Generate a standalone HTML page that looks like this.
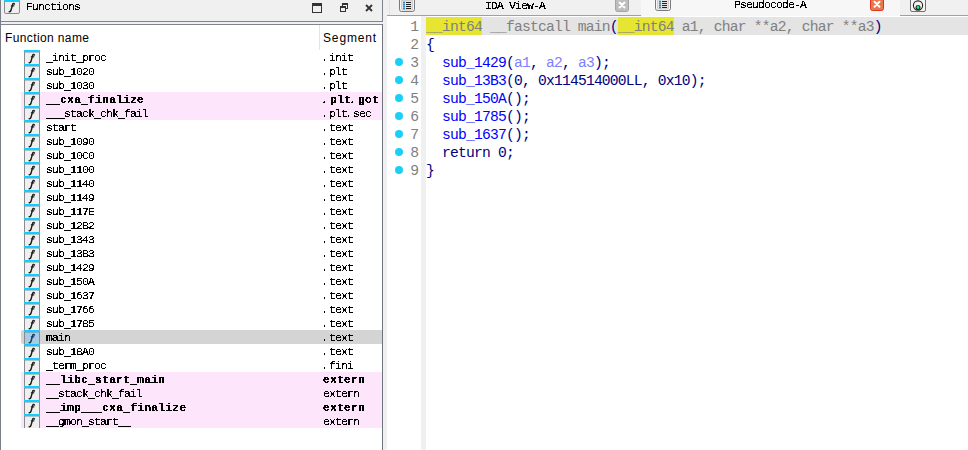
<!DOCTYPE html>
<html><head><meta charset="utf-8"><style>
*{margin:0;padding:0;box-sizing:border-box}
html,body{width:968px;height:450px;overflow:hidden;background:#f0f0f0;position:relative}
div,svg{position:absolute}
.ft{font-family:"Liberation Mono",monospace;font-size:11.5px;letter-spacing:-0.9px;line-height:15.0px;height:14px;color:#000;white-space:pre}
.u{position:relative;top:1px}
.d{position:relative;left:-2px}
.b{font-weight:bold;letter-spacing:0.1px}
.pink{left:21px;width:361px;height:14px;background:#fde6fb}
.sel{left:21px;width:361px;height:14px;background:#d4d4d4;border-radius:2px 0 0 2px}
.cl{left:426px;font-family:"Liberation Mono",monospace;font-size:14.67px;letter-spacing:-0.802px;line-height:18px;height:18px;white-space:pre}
.ln{left:395px;width:24px;text-align:right;font-family:"Liberation Mono",monospace;font-size:14.67px;line-height:18px;color:#808080}
.dot{left:395px;width:8px;height:8px;border-radius:50%;background:#1ad0f8}
.tt{font-family:"Liberation Mono",monospace;font-size:11.5px;letter-spacing:-0.9px;line-height:12px;color:#000;white-space:pre}
.hd{font-family:"Liberation Sans",sans-serif;font-size:12px;letter-spacing:0.38px;color:#000;line-height:14px;white-space:pre}
</style></head><body>
<svg width="0" height="0" style="left:0;top:0"><filter id="crisp" x="0" y="0" width="1" height="1" color-interpolation-filters="sRGB"><feComponentTransfer><feFuncA type="discrete" tableValues="0 1 1"/></feComponentTransfer></filter></svg>
<div style="left:0;top:0;width:1px;height:450px;background:#7a7e86"></div>
<div style="left:1px;top:0;width:381px;height:21px;background:#f0f0f0"></div>
<svg style="left:4px;top:-1px" width="16" height="15" viewBox="0 0 16 15"><rect x="0.5" y="0.5" width="15" height="14" rx="1.5" fill="#efefef" stroke="#8a8a8a"/><rect x="0" y="0" width="16" height="3" fill="#14cdfa"/><g transform="translate(0,0)" fill="none" stroke="#1e1e1e" stroke-linecap="round"><path d="M10.4 4.9C9.8 4.2 8.9 4.4 8.6 5.6L6.9 11.6C6.6 12.5 6.0 12.9 5.2 12.7" stroke-width="1.5"/><path d="M7.4 6.8L9.8 6.8" stroke-width="1.3"/></g></svg>
<svg style="left:312px;top:3px" width="10" height="10"><rect x="0.5" y="0.5" width="9" height="9" fill="none" stroke="#333"/><rect x="0" y="0" width="10" height="3" fill="#333"/></svg>
<svg style="left:340px;top:3px" width="8" height="9"><rect x="2.5" y="0.5" width="5" height="5" fill="#f0f0f0" stroke="#333"/><rect x="2" y="0" width="6" height="2" fill="#333"/><rect x="0.5" y="3.5" width="5" height="5" fill="#f0f0f0" stroke="#333"/><rect x="0" y="3" width="6" height="2" fill="#333"/></svg>
<svg style="left:365px;top:4px" width="8" height="8"><path d="M1 1L7 7M7 1L1 7" stroke="#333" stroke-width="1.8"/></svg>
<div style="left:1px;top:21px;width:382px;height:1px;background:#80848c"></div>
<div style="left:382px;top:0;width:1px;height:22px;background:#80848c"></div>
<div style="left:1px;top:24px;width:382px;height:1px;background:#80848c"></div>
<div style="left:382px;top:24px;width:1px;height:426px;background:#6e737c"></div>
<div style="left:1px;top:25px;width:381px;height:425px;background:#fff"></div>
<div class="hd" style="left:5px;top:31px">Function name</div>
<div class="hd" style="left:323px;top:31px;letter-spacing:0.85px">Segment</div>
<div style="left:319px;top:25px;width:1px;height:25px;background:#e3e3e3"></div>
<svg style="left:24px;top:50px" width="16" height="14" viewBox="0 0 16 14"><rect x="0" y="0" width="16" height="14" fill="#efefef"/><rect x="0" y="0" width="1" height="14" fill="#8a8a8a"/><rect x="15" y="0" width="1" height="14" fill="#8a8a8a"/><rect x="0" y="0" width="16" height="2" fill="#14cdfa"/><rect x="1" y="2" width="14" height="1" fill="#2a7f9a" opacity=".35"/><g transform="translate(0,0)" fill="none" stroke="#1e1e1e" stroke-linecap="round"><path d="M10.4 4.9C9.8 4.2 8.9 4.4 8.6 5.6L6.9 11.6C6.6 12.5 6.0 12.9 5.2 12.7" stroke-width="1.5"/><path d="M7.4 6.8L9.8 6.8" stroke-width="1.3"/></g></svg>
<svg style="left:24px;top:64px" width="16" height="14" viewBox="0 0 16 14"><rect x="0" y="0" width="16" height="14" fill="#efefef"/><rect x="0" y="0" width="1" height="14" fill="#8a8a8a"/><rect x="15" y="0" width="1" height="14" fill="#8a8a8a"/><rect x="0" y="0" width="16" height="2" fill="#14cdfa"/><rect x="1" y="2" width="14" height="1" fill="#2a7f9a" opacity=".35"/><g transform="translate(0,0)" fill="none" stroke="#1e1e1e" stroke-linecap="round"><path d="M10.4 4.9C9.8 4.2 8.9 4.4 8.6 5.6L6.9 11.6C6.6 12.5 6.0 12.9 5.2 12.7" stroke-width="1.5"/><path d="M7.4 6.8L9.8 6.8" stroke-width="1.3"/></g></svg>
<svg style="left:24px;top:78px" width="16" height="14" viewBox="0 0 16 14"><rect x="0" y="0" width="16" height="14" fill="#efefef"/><rect x="0" y="0" width="1" height="14" fill="#8a8a8a"/><rect x="15" y="0" width="1" height="14" fill="#8a8a8a"/><rect x="0" y="0" width="16" height="2" fill="#14cdfa"/><rect x="1" y="2" width="14" height="1" fill="#2a7f9a" opacity=".35"/><g transform="translate(0,0)" fill="none" stroke="#1e1e1e" stroke-linecap="round"><path d="M10.4 4.9C9.8 4.2 8.9 4.4 8.6 5.6L6.9 11.6C6.6 12.5 6.0 12.9 5.2 12.7" stroke-width="1.5"/><path d="M7.4 6.8L9.8 6.8" stroke-width="1.3"/></g></svg>
<div class="pink" style="top:92px"></div>
<svg style="left:24px;top:92px" width="16" height="14" viewBox="0 0 16 14"><rect x="0" y="0" width="16" height="14" fill="#efefef"/><rect x="0" y="0" width="1" height="14" fill="#8a8a8a"/><rect x="15" y="0" width="1" height="14" fill="#8a8a8a"/><rect x="0" y="0" width="16" height="2" fill="#14cdfa"/><rect x="1" y="2" width="14" height="1" fill="#2a7f9a" opacity=".35"/><g transform="translate(0,0)" fill="none" stroke="#1e1e1e" stroke-linecap="round"><path d="M10.4 4.9C9.8 4.2 8.9 4.4 8.6 5.6L6.9 11.6C6.6 12.5 6.0 12.9 5.2 12.7" stroke-width="1.5"/><path d="M7.4 6.8L9.8 6.8" stroke-width="1.3"/></g></svg>
<div class="pink" style="top:106px"></div>
<svg style="left:24px;top:106px" width="16" height="14" viewBox="0 0 16 14"><rect x="0" y="0" width="16" height="14" fill="#efefef"/><rect x="0" y="0" width="1" height="14" fill="#8a8a8a"/><rect x="15" y="0" width="1" height="14" fill="#8a8a8a"/><rect x="0" y="0" width="16" height="2" fill="#14cdfa"/><rect x="1" y="2" width="14" height="1" fill="#2a7f9a" opacity=".35"/><g transform="translate(0,0)" fill="none" stroke="#1e1e1e" stroke-linecap="round"><path d="M10.4 4.9C9.8 4.2 8.9 4.4 8.6 5.6L6.9 11.6C6.6 12.5 6.0 12.9 5.2 12.7" stroke-width="1.5"/><path d="M7.4 6.8L9.8 6.8" stroke-width="1.3"/></g></svg>
<svg style="left:24px;top:120px" width="16" height="14" viewBox="0 0 16 14"><rect x="0" y="0" width="16" height="14" fill="#efefef"/><rect x="0" y="0" width="1" height="14" fill="#8a8a8a"/><rect x="15" y="0" width="1" height="14" fill="#8a8a8a"/><rect x="0" y="0" width="16" height="2" fill="#14cdfa"/><rect x="1" y="2" width="14" height="1" fill="#2a7f9a" opacity=".35"/><g transform="translate(0,0)" fill="none" stroke="#1e1e1e" stroke-linecap="round"><path d="M10.4 4.9C9.8 4.2 8.9 4.4 8.6 5.6L6.9 11.6C6.6 12.5 6.0 12.9 5.2 12.7" stroke-width="1.5"/><path d="M7.4 6.8L9.8 6.8" stroke-width="1.3"/></g></svg>
<svg style="left:24px;top:134px" width="16" height="14" viewBox="0 0 16 14"><rect x="0" y="0" width="16" height="14" fill="#efefef"/><rect x="0" y="0" width="1" height="14" fill="#8a8a8a"/><rect x="15" y="0" width="1" height="14" fill="#8a8a8a"/><rect x="0" y="0" width="16" height="2" fill="#14cdfa"/><rect x="1" y="2" width="14" height="1" fill="#2a7f9a" opacity=".35"/><g transform="translate(0,0)" fill="none" stroke="#1e1e1e" stroke-linecap="round"><path d="M10.4 4.9C9.8 4.2 8.9 4.4 8.6 5.6L6.9 11.6C6.6 12.5 6.0 12.9 5.2 12.7" stroke-width="1.5"/><path d="M7.4 6.8L9.8 6.8" stroke-width="1.3"/></g></svg>
<svg style="left:24px;top:148px" width="16" height="14" viewBox="0 0 16 14"><rect x="0" y="0" width="16" height="14" fill="#efefef"/><rect x="0" y="0" width="1" height="14" fill="#8a8a8a"/><rect x="15" y="0" width="1" height="14" fill="#8a8a8a"/><rect x="0" y="0" width="16" height="2" fill="#14cdfa"/><rect x="1" y="2" width="14" height="1" fill="#2a7f9a" opacity=".35"/><g transform="translate(0,0)" fill="none" stroke="#1e1e1e" stroke-linecap="round"><path d="M10.4 4.9C9.8 4.2 8.9 4.4 8.6 5.6L6.9 11.6C6.6 12.5 6.0 12.9 5.2 12.7" stroke-width="1.5"/><path d="M7.4 6.8L9.8 6.8" stroke-width="1.3"/></g></svg>
<svg style="left:24px;top:162px" width="16" height="14" viewBox="0 0 16 14"><rect x="0" y="0" width="16" height="14" fill="#efefef"/><rect x="0" y="0" width="1" height="14" fill="#8a8a8a"/><rect x="15" y="0" width="1" height="14" fill="#8a8a8a"/><rect x="0" y="0" width="16" height="2" fill="#14cdfa"/><rect x="1" y="2" width="14" height="1" fill="#2a7f9a" opacity=".35"/><g transform="translate(0,0)" fill="none" stroke="#1e1e1e" stroke-linecap="round"><path d="M10.4 4.9C9.8 4.2 8.9 4.4 8.6 5.6L6.9 11.6C6.6 12.5 6.0 12.9 5.2 12.7" stroke-width="1.5"/><path d="M7.4 6.8L9.8 6.8" stroke-width="1.3"/></g></svg>
<svg style="left:24px;top:176px" width="16" height="14" viewBox="0 0 16 14"><rect x="0" y="0" width="16" height="14" fill="#efefef"/><rect x="0" y="0" width="1" height="14" fill="#8a8a8a"/><rect x="15" y="0" width="1" height="14" fill="#8a8a8a"/><rect x="0" y="0" width="16" height="2" fill="#14cdfa"/><rect x="1" y="2" width="14" height="1" fill="#2a7f9a" opacity=".35"/><g transform="translate(0,0)" fill="none" stroke="#1e1e1e" stroke-linecap="round"><path d="M10.4 4.9C9.8 4.2 8.9 4.4 8.6 5.6L6.9 11.6C6.6 12.5 6.0 12.9 5.2 12.7" stroke-width="1.5"/><path d="M7.4 6.8L9.8 6.8" stroke-width="1.3"/></g></svg>
<svg style="left:24px;top:190px" width="16" height="14" viewBox="0 0 16 14"><rect x="0" y="0" width="16" height="14" fill="#efefef"/><rect x="0" y="0" width="1" height="14" fill="#8a8a8a"/><rect x="15" y="0" width="1" height="14" fill="#8a8a8a"/><rect x="0" y="0" width="16" height="2" fill="#14cdfa"/><rect x="1" y="2" width="14" height="1" fill="#2a7f9a" opacity=".35"/><g transform="translate(0,0)" fill="none" stroke="#1e1e1e" stroke-linecap="round"><path d="M10.4 4.9C9.8 4.2 8.9 4.4 8.6 5.6L6.9 11.6C6.6 12.5 6.0 12.9 5.2 12.7" stroke-width="1.5"/><path d="M7.4 6.8L9.8 6.8" stroke-width="1.3"/></g></svg>
<svg style="left:24px;top:204px" width="16" height="14" viewBox="0 0 16 14"><rect x="0" y="0" width="16" height="14" fill="#efefef"/><rect x="0" y="0" width="1" height="14" fill="#8a8a8a"/><rect x="15" y="0" width="1" height="14" fill="#8a8a8a"/><rect x="0" y="0" width="16" height="2" fill="#14cdfa"/><rect x="1" y="2" width="14" height="1" fill="#2a7f9a" opacity=".35"/><g transform="translate(0,0)" fill="none" stroke="#1e1e1e" stroke-linecap="round"><path d="M10.4 4.9C9.8 4.2 8.9 4.4 8.6 5.6L6.9 11.6C6.6 12.5 6.0 12.9 5.2 12.7" stroke-width="1.5"/><path d="M7.4 6.8L9.8 6.8" stroke-width="1.3"/></g></svg>
<svg style="left:24px;top:218px" width="16" height="14" viewBox="0 0 16 14"><rect x="0" y="0" width="16" height="14" fill="#efefef"/><rect x="0" y="0" width="1" height="14" fill="#8a8a8a"/><rect x="15" y="0" width="1" height="14" fill="#8a8a8a"/><rect x="0" y="0" width="16" height="2" fill="#14cdfa"/><rect x="1" y="2" width="14" height="1" fill="#2a7f9a" opacity=".35"/><g transform="translate(0,0)" fill="none" stroke="#1e1e1e" stroke-linecap="round"><path d="M10.4 4.9C9.8 4.2 8.9 4.4 8.6 5.6L6.9 11.6C6.6 12.5 6.0 12.9 5.2 12.7" stroke-width="1.5"/><path d="M7.4 6.8L9.8 6.8" stroke-width="1.3"/></g></svg>
<svg style="left:24px;top:232px" width="16" height="14" viewBox="0 0 16 14"><rect x="0" y="0" width="16" height="14" fill="#efefef"/><rect x="0" y="0" width="1" height="14" fill="#8a8a8a"/><rect x="15" y="0" width="1" height="14" fill="#8a8a8a"/><rect x="0" y="0" width="16" height="2" fill="#14cdfa"/><rect x="1" y="2" width="14" height="1" fill="#2a7f9a" opacity=".35"/><g transform="translate(0,0)" fill="none" stroke="#1e1e1e" stroke-linecap="round"><path d="M10.4 4.9C9.8 4.2 8.9 4.4 8.6 5.6L6.9 11.6C6.6 12.5 6.0 12.9 5.2 12.7" stroke-width="1.5"/><path d="M7.4 6.8L9.8 6.8" stroke-width="1.3"/></g></svg>
<svg style="left:24px;top:246px" width="16" height="14" viewBox="0 0 16 14"><rect x="0" y="0" width="16" height="14" fill="#efefef"/><rect x="0" y="0" width="1" height="14" fill="#8a8a8a"/><rect x="15" y="0" width="1" height="14" fill="#8a8a8a"/><rect x="0" y="0" width="16" height="2" fill="#14cdfa"/><rect x="1" y="2" width="14" height="1" fill="#2a7f9a" opacity=".35"/><g transform="translate(0,0)" fill="none" stroke="#1e1e1e" stroke-linecap="round"><path d="M10.4 4.9C9.8 4.2 8.9 4.4 8.6 5.6L6.9 11.6C6.6 12.5 6.0 12.9 5.2 12.7" stroke-width="1.5"/><path d="M7.4 6.8L9.8 6.8" stroke-width="1.3"/></g></svg>
<svg style="left:24px;top:260px" width="16" height="14" viewBox="0 0 16 14"><rect x="0" y="0" width="16" height="14" fill="#efefef"/><rect x="0" y="0" width="1" height="14" fill="#8a8a8a"/><rect x="15" y="0" width="1" height="14" fill="#8a8a8a"/><rect x="0" y="0" width="16" height="2" fill="#14cdfa"/><rect x="1" y="2" width="14" height="1" fill="#2a7f9a" opacity=".35"/><g transform="translate(0,0)" fill="none" stroke="#1e1e1e" stroke-linecap="round"><path d="M10.4 4.9C9.8 4.2 8.9 4.4 8.6 5.6L6.9 11.6C6.6 12.5 6.0 12.9 5.2 12.7" stroke-width="1.5"/><path d="M7.4 6.8L9.8 6.8" stroke-width="1.3"/></g></svg>
<svg style="left:24px;top:274px" width="16" height="14" viewBox="0 0 16 14"><rect x="0" y="0" width="16" height="14" fill="#efefef"/><rect x="0" y="0" width="1" height="14" fill="#8a8a8a"/><rect x="15" y="0" width="1" height="14" fill="#8a8a8a"/><rect x="0" y="0" width="16" height="2" fill="#14cdfa"/><rect x="1" y="2" width="14" height="1" fill="#2a7f9a" opacity=".35"/><g transform="translate(0,0)" fill="none" stroke="#1e1e1e" stroke-linecap="round"><path d="M10.4 4.9C9.8 4.2 8.9 4.4 8.6 5.6L6.9 11.6C6.6 12.5 6.0 12.9 5.2 12.7" stroke-width="1.5"/><path d="M7.4 6.8L9.8 6.8" stroke-width="1.3"/></g></svg>
<svg style="left:24px;top:288px" width="16" height="14" viewBox="0 0 16 14"><rect x="0" y="0" width="16" height="14" fill="#efefef"/><rect x="0" y="0" width="1" height="14" fill="#8a8a8a"/><rect x="15" y="0" width="1" height="14" fill="#8a8a8a"/><rect x="0" y="0" width="16" height="2" fill="#14cdfa"/><rect x="1" y="2" width="14" height="1" fill="#2a7f9a" opacity=".35"/><g transform="translate(0,0)" fill="none" stroke="#1e1e1e" stroke-linecap="round"><path d="M10.4 4.9C9.8 4.2 8.9 4.4 8.6 5.6L6.9 11.6C6.6 12.5 6.0 12.9 5.2 12.7" stroke-width="1.5"/><path d="M7.4 6.8L9.8 6.8" stroke-width="1.3"/></g></svg>
<svg style="left:24px;top:302px" width="16" height="14" viewBox="0 0 16 14"><rect x="0" y="0" width="16" height="14" fill="#efefef"/><rect x="0" y="0" width="1" height="14" fill="#8a8a8a"/><rect x="15" y="0" width="1" height="14" fill="#8a8a8a"/><rect x="0" y="0" width="16" height="2" fill="#14cdfa"/><rect x="1" y="2" width="14" height="1" fill="#2a7f9a" opacity=".35"/><g transform="translate(0,0)" fill="none" stroke="#1e1e1e" stroke-linecap="round"><path d="M10.4 4.9C9.8 4.2 8.9 4.4 8.6 5.6L6.9 11.6C6.6 12.5 6.0 12.9 5.2 12.7" stroke-width="1.5"/><path d="M7.4 6.8L9.8 6.8" stroke-width="1.3"/></g></svg>
<svg style="left:24px;top:316px" width="16" height="14" viewBox="0 0 16 14"><rect x="0" y="0" width="16" height="14" fill="#efefef"/><rect x="0" y="0" width="1" height="14" fill="#8a8a8a"/><rect x="15" y="0" width="1" height="14" fill="#8a8a8a"/><rect x="0" y="0" width="16" height="2" fill="#14cdfa"/><rect x="1" y="2" width="14" height="1" fill="#2a7f9a" opacity=".35"/><g transform="translate(0,0)" fill="none" stroke="#1e1e1e" stroke-linecap="round"><path d="M10.4 4.9C9.8 4.2 8.9 4.4 8.6 5.6L6.9 11.6C6.6 12.5 6.0 12.9 5.2 12.7" stroke-width="1.5"/><path d="M7.4 6.8L9.8 6.8" stroke-width="1.3"/></g></svg>
<div class="sel" style="top:330px"></div>
<svg style="left:24px;top:330px" width="16" height="14" viewBox="0 0 16 14"><rect x="0" y="0" width="16" height="14" fill="#a9cbe9"/><rect x="0" y="0" width="1" height="14" fill="#8a8a8a"/><rect x="15" y="0" width="1" height="14" fill="#8a8a8a"/><rect x="0" y="0" width="16" height="2" fill="#14cdfa"/><rect x="1" y="2" width="14" height="1" fill="#2a7f9a" opacity=".35"/><g transform="translate(0,0)" fill="none" stroke="#1b3a5c" stroke-linecap="round"><path d="M10.4 4.9C9.8 4.2 8.9 4.4 8.6 5.6L6.9 11.6C6.6 12.5 6.0 12.9 5.2 12.7" stroke-width="1.5"/><path d="M7.4 6.8L9.8 6.8" stroke-width="1.3"/></g></svg>
<svg style="left:24px;top:344px" width="16" height="14" viewBox="0 0 16 14"><rect x="0" y="0" width="16" height="14" fill="#efefef"/><rect x="0" y="0" width="1" height="14" fill="#8a8a8a"/><rect x="15" y="0" width="1" height="14" fill="#8a8a8a"/><rect x="0" y="0" width="16" height="2" fill="#14cdfa"/><rect x="1" y="2" width="14" height="1" fill="#2a7f9a" opacity=".35"/><g transform="translate(0,0)" fill="none" stroke="#1e1e1e" stroke-linecap="round"><path d="M10.4 4.9C9.8 4.2 8.9 4.4 8.6 5.6L6.9 11.6C6.6 12.5 6.0 12.9 5.2 12.7" stroke-width="1.5"/><path d="M7.4 6.8L9.8 6.8" stroke-width="1.3"/></g></svg>
<svg style="left:24px;top:358px" width="16" height="14" viewBox="0 0 16 14"><rect x="0" y="0" width="16" height="14" fill="#efefef"/><rect x="0" y="0" width="1" height="14" fill="#8a8a8a"/><rect x="15" y="0" width="1" height="14" fill="#8a8a8a"/><rect x="0" y="0" width="16" height="2" fill="#14cdfa"/><rect x="1" y="2" width="14" height="1" fill="#2a7f9a" opacity=".35"/><g transform="translate(0,0)" fill="none" stroke="#1e1e1e" stroke-linecap="round"><path d="M10.4 4.9C9.8 4.2 8.9 4.4 8.6 5.6L6.9 11.6C6.6 12.5 6.0 12.9 5.2 12.7" stroke-width="1.5"/><path d="M7.4 6.8L9.8 6.8" stroke-width="1.3"/></g></svg>
<div class="pink" style="top:372px"></div>
<svg style="left:24px;top:372px" width="16" height="14" viewBox="0 0 16 14"><rect x="0" y="0" width="16" height="14" fill="#efefef"/><rect x="0" y="0" width="1" height="14" fill="#8a8a8a"/><rect x="15" y="0" width="1" height="14" fill="#8a8a8a"/><rect x="0" y="0" width="16" height="2" fill="#14cdfa"/><rect x="1" y="2" width="14" height="1" fill="#2a7f9a" opacity=".35"/><g transform="translate(0,0)" fill="none" stroke="#1e1e1e" stroke-linecap="round"><path d="M10.4 4.9C9.8 4.2 8.9 4.4 8.6 5.6L6.9 11.6C6.6 12.5 6.0 12.9 5.2 12.7" stroke-width="1.5"/><path d="M7.4 6.8L9.8 6.8" stroke-width="1.3"/></g></svg>
<div class="pink" style="top:386px"></div>
<svg style="left:24px;top:386px" width="16" height="14" viewBox="0 0 16 14"><rect x="0" y="0" width="16" height="14" fill="#efefef"/><rect x="0" y="0" width="1" height="14" fill="#8a8a8a"/><rect x="15" y="0" width="1" height="14" fill="#8a8a8a"/><rect x="0" y="0" width="16" height="2" fill="#14cdfa"/><rect x="1" y="2" width="14" height="1" fill="#2a7f9a" opacity=".35"/><g transform="translate(0,0)" fill="none" stroke="#1e1e1e" stroke-linecap="round"><path d="M10.4 4.9C9.8 4.2 8.9 4.4 8.6 5.6L6.9 11.6C6.6 12.5 6.0 12.9 5.2 12.7" stroke-width="1.5"/><path d="M7.4 6.8L9.8 6.8" stroke-width="1.3"/></g></svg>
<div class="pink" style="top:400px"></div>
<svg style="left:24px;top:400px" width="16" height="14" viewBox="0 0 16 14"><rect x="0" y="0" width="16" height="14" fill="#efefef"/><rect x="0" y="0" width="1" height="14" fill="#8a8a8a"/><rect x="15" y="0" width="1" height="14" fill="#8a8a8a"/><rect x="0" y="0" width="16" height="2" fill="#14cdfa"/><rect x="1" y="2" width="14" height="1" fill="#2a7f9a" opacity=".35"/><g transform="translate(0,0)" fill="none" stroke="#1e1e1e" stroke-linecap="round"><path d="M10.4 4.9C9.8 4.2 8.9 4.4 8.6 5.6L6.9 11.6C6.6 12.5 6.0 12.9 5.2 12.7" stroke-width="1.5"/><path d="M7.4 6.8L9.8 6.8" stroke-width="1.3"/></g></svg>
<div class="pink" style="top:414px"></div>
<svg style="left:24px;top:414px" width="16" height="14" viewBox="0 0 16 14"><rect x="0" y="0" width="16" height="14" fill="#efefef"/><rect x="0" y="0" width="1" height="14" fill="#8a8a8a"/><rect x="15" y="0" width="1" height="14" fill="#8a8a8a"/><rect x="0" y="0" width="16" height="2" fill="#14cdfa"/><rect x="1" y="2" width="14" height="1" fill="#2a7f9a" opacity=".35"/><g transform="translate(0,0)" fill="none" stroke="#1e1e1e" stroke-linecap="round"><path d="M10.4 4.9C9.8 4.2 8.9 4.4 8.6 5.6L6.9 11.6C6.6 12.5 6.0 12.9 5.2 12.7" stroke-width="1.5"/><path d="M7.4 6.8L9.8 6.8" stroke-width="1.3"/></g></svg>
<div style="left:383px;top:0;width:4px;height:450px;background:#f0f0f0"></div>
<div style="left:387px;top:0;width:254px;height:15px;background:#f0f0f0"></div>
<div style="left:389px;top:0;width:1px;height:15px;background:#e3e3e3"></div>
<div style="left:641px;top:0;width:259px;height:16px;background:#f7f7f7"></div>
<div style="left:900px;top:0;width:68px;height:15px;background:#f0f0f0"></div>
<div style="left:387px;top:15px;width:254px;height:1px;background:#a0a0a0"></div>
<div style="left:900px;top:15px;width:68px;height:1px;background:#a0a0a0"></div>
<svg style="left:399px;top:-4px" width="16" height="16" viewBox="0 0 16 16"><rect x="0.5" y="0.5" width="15" height="15" rx="2" fill="#f6f6f6" stroke="#7a7a7a"/><rect x="2" y="2" width="12" height="12.5" rx="1.5" fill="#cdcdcd"/><rect x="3" y="5" width="10" height="8.5" fill="#e4e4e4"/><circle cx="5" cy="6.5" r="1" fill="#1f7fc0"/><rect x="7" y="6" width="5" height="1" fill="#222"/><circle cx="5" cy="8.5" r="1" fill="#1f7fc0"/><rect x="7" y="8" width="5" height="1" fill="#222"/><circle cx="5" cy="10.5" r="1" fill="#1f7fc0"/><rect x="7" y="10" width="5" height="1" fill="#222"/><circle cx="5" cy="12.5" r="1" fill="#1f7fc0"/><rect x="7" y="12" width="5" height="1" fill="#222"/></svg>
<svg style="left:615px;top:0" width="14" height="12" viewBox="0 0 14 12"><rect x="0.5" y="-3" width="13" height="14.5" rx="2" fill="#bdbdbd" stroke="#a4a4a4"/><path d="M4.5 2.5L9.5 7.5M9.5 2.5L4.5 7.5" stroke="#fff" stroke-width="2" stroke-linecap="round"/></svg>
<svg style="left:655px;top:-5px" width="16" height="16" viewBox="0 0 16 16"><rect x="0.5" y="0.5" width="15" height="15" rx="2" fill="#f6f6f6" stroke="#7a7a7a"/><rect x="2" y="2" width="12" height="12.5" rx="1.5" fill="#cdcdcd"/><rect x="3" y="5" width="10" height="8.5" fill="#e4e4e4"/><circle cx="5" cy="6.5" r="1" fill="#1f7fc0"/><rect x="7" y="6" width="5" height="1" fill="#222"/><circle cx="5" cy="8.5" r="1" fill="#1f7fc0"/><rect x="7" y="8" width="5" height="1" fill="#222"/><circle cx="5" cy="10.5" r="1" fill="#1f7fc0"/><rect x="7" y="10" width="5" height="1" fill="#222"/><circle cx="5" cy="12.5" r="1" fill="#1f7fc0"/><rect x="7" y="12" width="5" height="1" fill="#222"/></svg>
<svg style="left:870px;top:0" width="14" height="11" viewBox="0 0 14 11"><rect x="0.5" y="-3" width="13" height="13.5" rx="2" fill="#e8784c" stroke="#dd3322"/><path d="M4.5 1.8L9.5 6.8M9.5 1.8L4.5 6.8" stroke="#fff" stroke-width="2" stroke-linecap="round"/></svg>
<svg style="left:910px;top:-4px" width="16" height="16" viewBox="0 0 16 16"><rect x="0.5" y="0.5" width="15" height="15" rx="1.5" fill="#f4f4f4" stroke="#707070"/><rect x="5" y="2" width="6" height="2" fill="#555"/><circle cx="8" cy="9.5" r="4.6" fill="none" stroke="#222" stroke-width="1.1"/><circle cx="8" cy="11.5" r="2.5" fill="#1e1e1e"/><ellipse cx="8" cy="11.2" rx="1.4" ry="1.8" fill="#30e080"/></svg>
<div style="left:387px;top:16px;width:581px;height:434px;background:#fff"></div>
<div style="left:421px;top:16px;width:5px;height:434px;background:#f0f0f0"></div>
<div style="left:426px;top:17px;width:542px;height:18px;background:#e4e4e4"></div>
<div style="left:426px;top:17px;width:56px;height:18px;background:#e6e632"></div>
<div style="left:618px;top:17px;width:56px;height:18px;background:#e6e632"></div>
<div class="cl" style="top:18.0px"><span style="color:#808080">__int64</span><span style="color:#808080"> __fastcall main</span><span style="color:#000080">(</span><span style="color:#808080">__int64</span><span style="color:#808080"> a1, char **a2, char **a3</span><span style="color:#000080">)</span></div>
<div class="ln" style="top:18.0px">1</div>
<div class="cl" style="top:36.0px"><span style="color:#000080">{</span></div>
<div class="ln" style="top:36.0px">2</div>
<div class="cl" style="top:54.0px"><span style="color:#000080">  </span><span style="color:#0000ff">sub_1429</span><span style="color:#000080">(</span><span style="color:#8080ff">a1</span><span style="color:#000080">, </span><span style="color:#8080ff">a2</span><span style="color:#000080">, </span><span style="color:#8080ff">a3</span><span style="color:#000080">);</span></div>
<div class="ln" style="top:54.0px">3</div>
<div class="dot" style="top:58px"></div>
<div class="cl" style="top:72.0px"><span style="color:#000080">  </span><span style="color:#0000ff">sub_13B3</span><span style="color:#000080">(0, 0x114514000LL, 0x10);</span></div>
<div class="ln" style="top:72.0px">4</div>
<div class="dot" style="top:76px"></div>
<div class="cl" style="top:90.0px"><span style="color:#000080">  </span><span style="color:#0000ff">sub_150A</span><span style="color:#000080">();</span></div>
<div class="ln" style="top:90.0px">5</div>
<div class="dot" style="top:94px"></div>
<div class="cl" style="top:108.0px"><span style="color:#000080">  </span><span style="color:#0000ff">sub_1785</span><span style="color:#000080">();</span></div>
<div class="ln" style="top:108.0px">6</div>
<div class="dot" style="top:112px"></div>
<div class="cl" style="top:126.0px"><span style="color:#000080">  </span><span style="color:#0000ff">sub_1637</span><span style="color:#000080">();</span></div>
<div class="ln" style="top:126.0px">7</div>
<div class="dot" style="top:130px"></div>
<div class="cl" style="top:144.0px"><span style="color:#000080">  return 0;</span></div>
<div class="ln" style="top:144.0px">8</div>
<div class="dot" style="top:148px"></div>
<div class="cl" style="top:162.0px"><span style="color:#000080">}</span></div>
<div class="ln" style="top:162.0px">9</div>
<div class="dot" style="top:166px"></div>
<div style="left:0;top:0;width:968px;height:450px;filter:url(#crisp);">
<div class="tt" style="left:26px;top:1px">Functions</div>
<div class="tt" style="left:485px;top:0px">IDA View-A</div>
<div class="tt" style="left:734px;top:-1px">Pseudocode-A</div>
<div class="ft" style="left:46px;top:50px"><span class="u">_</span>init<span class="u">_</span>proc</div>
<div class="ft" style="left:323px;top:50px"><span class="d">.</span>init</div>
<div class="ft" style="left:46px;top:64px">sub<span class="u">_</span>1020</div>
<div class="ft" style="left:323px;top:64px"><span class="d">.</span>plt</div>
<div class="ft" style="left:46px;top:78px">sub<span class="u">_</span>1030</div>
<div class="ft" style="left:323px;top:78px"><span class="d">.</span>plt</div>
<div class="ft b" style="left:46px;top:92px"><span class="u">_</span><span class="u">_</span>cxa<span class="u">_</span>finalize</div>
<div class="ft b" style="left:323px;top:92px"><span class="d">.</span>plt<span class="d">.</span>got</div>
<div class="ft" style="left:46px;top:106px"><span class="u">_</span><span class="u">_</span><span class="u">_</span>stack<span class="u">_</span>chk<span class="u">_</span>fail</div>
<div class="ft" style="left:323px;top:106px"><span class="d">.</span>plt<span class="d">.</span>sec</div>
<div class="ft" style="left:46px;top:120px">start</div>
<div class="ft" style="left:323px;top:120px"><span class="d">.</span>text</div>
<div class="ft" style="left:46px;top:134px">sub<span class="u">_</span>1090</div>
<div class="ft" style="left:323px;top:134px"><span class="d">.</span>text</div>
<div class="ft" style="left:46px;top:148px">sub<span class="u">_</span>10C0</div>
<div class="ft" style="left:323px;top:148px"><span class="d">.</span>text</div>
<div class="ft" style="left:46px;top:162px">sub<span class="u">_</span>1100</div>
<div class="ft" style="left:323px;top:162px"><span class="d">.</span>text</div>
<div class="ft" style="left:46px;top:176px">sub<span class="u">_</span>1140</div>
<div class="ft" style="left:323px;top:176px"><span class="d">.</span>text</div>
<div class="ft" style="left:46px;top:190px">sub<span class="u">_</span>1149</div>
<div class="ft" style="left:323px;top:190px"><span class="d">.</span>text</div>
<div class="ft" style="left:46px;top:204px">sub<span class="u">_</span>117E</div>
<div class="ft" style="left:323px;top:204px"><span class="d">.</span>text</div>
<div class="ft" style="left:46px;top:218px">sub<span class="u">_</span>12B2</div>
<div class="ft" style="left:323px;top:218px"><span class="d">.</span>text</div>
<div class="ft" style="left:46px;top:232px">sub<span class="u">_</span>1343</div>
<div class="ft" style="left:323px;top:232px"><span class="d">.</span>text</div>
<div class="ft" style="left:46px;top:246px">sub<span class="u">_</span>13B3</div>
<div class="ft" style="left:323px;top:246px"><span class="d">.</span>text</div>
<div class="ft" style="left:46px;top:260px">sub<span class="u">_</span>1429</div>
<div class="ft" style="left:323px;top:260px"><span class="d">.</span>text</div>
<div class="ft" style="left:46px;top:274px">sub<span class="u">_</span>150A</div>
<div class="ft" style="left:323px;top:274px"><span class="d">.</span>text</div>
<div class="ft" style="left:46px;top:288px">sub<span class="u">_</span>1637</div>
<div class="ft" style="left:323px;top:288px"><span class="d">.</span>text</div>
<div class="ft" style="left:46px;top:302px">sub<span class="u">_</span>1766</div>
<div class="ft" style="left:323px;top:302px"><span class="d">.</span>text</div>
<div class="ft" style="left:46px;top:316px">sub<span class="u">_</span>1785</div>
<div class="ft" style="left:323px;top:316px"><span class="d">.</span>text</div>
<div class="ft" style="left:46px;top:330px">main</div>
<div class="ft" style="left:323px;top:330px"><span class="d">.</span>text</div>
<div class="ft" style="left:46px;top:344px">sub<span class="u">_</span>18A0</div>
<div class="ft" style="left:323px;top:344px"><span class="d">.</span>text</div>
<div class="ft" style="left:46px;top:358px"><span class="u">_</span>term<span class="u">_</span>proc</div>
<div class="ft" style="left:323px;top:358px"><span class="d">.</span>fini</div>
<div class="ft b" style="left:46px;top:372px"><span class="u">_</span><span class="u">_</span>libc<span class="u">_</span>start<span class="u">_</span>main</div>
<div class="ft b" style="left:323px;top:372px">extern</div>
<div class="ft" style="left:46px;top:386px"><span class="u">_</span><span class="u">_</span>stack<span class="u">_</span>chk<span class="u">_</span>fail</div>
<div class="ft" style="left:323px;top:386px">extern</div>
<div class="ft b" style="left:46px;top:400px"><span class="u">_</span><span class="u">_</span>imp<span class="u">_</span><span class="u">_</span><span class="u">_</span>cxa<span class="u">_</span>finalize</div>
<div class="ft b" style="left:323px;top:400px">extern</div>
<div class="ft" style="left:46px;top:414px"><span class="u">_</span><span class="u">_</span>gmon<span class="u">_</span>start<span class="u">_</span><span class="u">_</span></div>
<div class="ft" style="left:323px;top:414px">extern</div>
</div>
</body></html>
